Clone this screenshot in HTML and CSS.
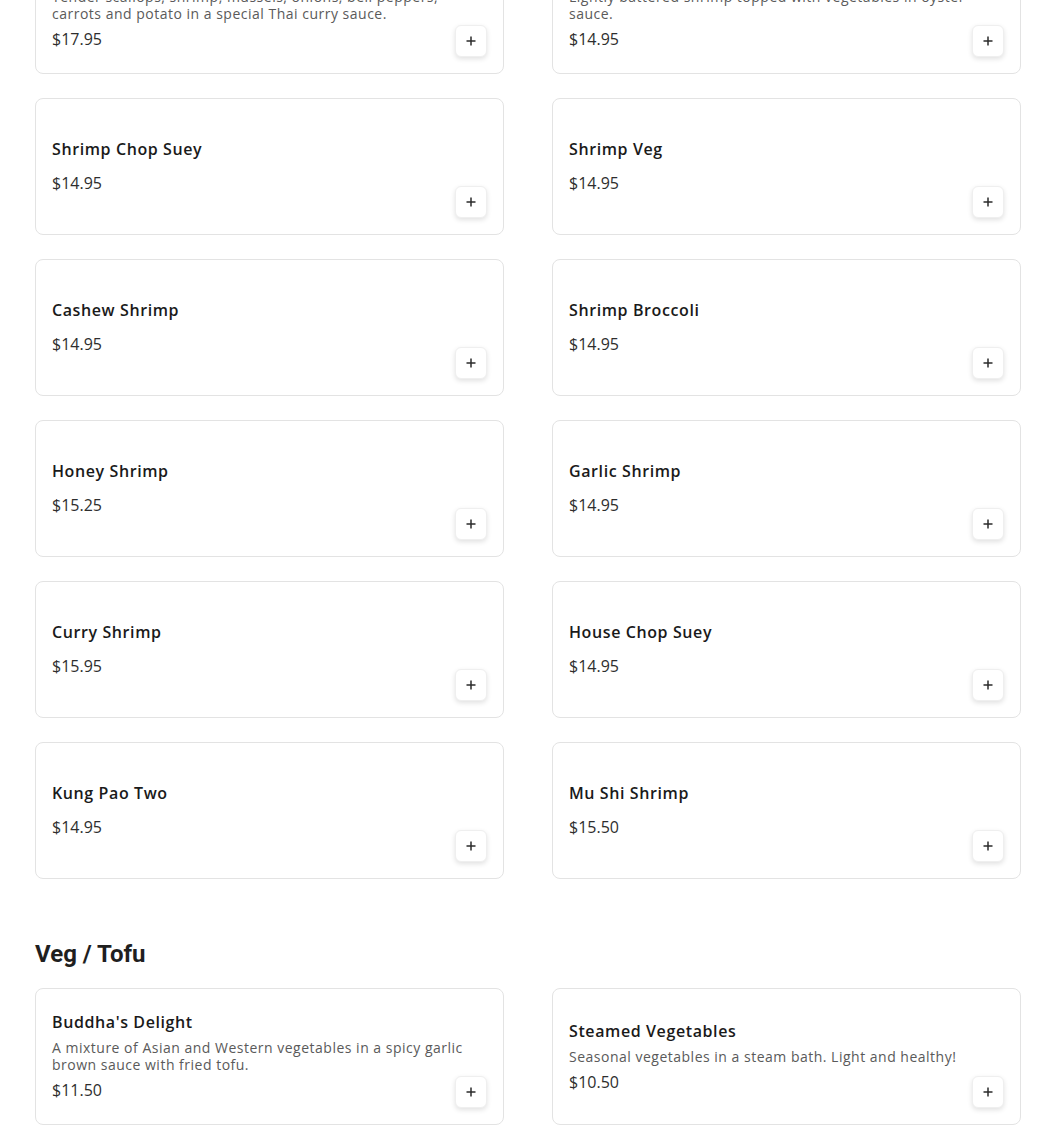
FILE: index.html
```html
<!DOCTYPE html>
<html lang="en">
<head>
<meta charset="utf-8">
<title>Menu</title>
<link rel="stylesheet" href="styles.css">
</head>
<body>
<main class="menu">
  <section class="section section-first">
    <div class="grid">
      <article class="card">
        <div class="info">
          <h3 class="name">Seafood Curry</h3>
          <p class="desc">Tender scallops, shrimp, mussels, onions, bell peppers, carrots and potato in a special Thai curry sauce.</p>
          <p class="price">$17.95</p>
        </div>
        <button class="add" aria-label="Add"><svg viewBox="0 0 12 12" width="12" height="12"><path d="M6 1.5v9M1.5 6h9" stroke="#2b2b2b" stroke-width="1.5" fill="none"/></svg></button>
      </article>
      <article class="card">
        <div class="info">
          <h3 class="name">Crispy Shrimp</h3>
          <p class="desc">Lightly battered shrimp topped with vegetables in oyster sauce.</p>
          <p class="price">$14.95</p>
        </div>
        <button class="add" aria-label="Add"><svg viewBox="0 0 12 12" width="12" height="12"><path d="M6 1.5v9M1.5 6h9" stroke="#2b2b2b" stroke-width="1.5" fill="none"/></svg></button>
      </article>
      <article class="card">
        <div class="info">
          <h3 class="name">Shrimp Chop Suey</h3>
          <p class="desc"></p>
          <p class="price">$14.95</p>
        </div>
        <button class="add" aria-label="Add"><svg viewBox="0 0 12 12" width="12" height="12"><path d="M6 1.5v9M1.5 6h9" stroke="#2b2b2b" stroke-width="1.5" fill="none"/></svg></button>
      </article>
      <article class="card">
        <div class="info">
          <h3 class="name">Shrimp Veg</h3>
          <p class="desc"></p>
          <p class="price">$14.95</p>
        </div>
        <button class="add" aria-label="Add"><svg viewBox="0 0 12 12" width="12" height="12"><path d="M6 1.5v9M1.5 6h9" stroke="#2b2b2b" stroke-width="1.5" fill="none"/></svg></button>
      </article>
      <article class="card">
        <div class="info">
          <h3 class="name">Cashew Shrimp</h3>
          <p class="desc"></p>
          <p class="price">$14.95</p>
        </div>
        <button class="add" aria-label="Add"><svg viewBox="0 0 12 12" width="12" height="12"><path d="M6 1.5v9M1.5 6h9" stroke="#2b2b2b" stroke-width="1.5" fill="none"/></svg></button>
      </article>
      <article class="card">
        <div class="info">
          <h3 class="name">Shrimp Broccoli</h3>
          <p class="desc"></p>
          <p class="price">$14.95</p>
        </div>
        <button class="add" aria-label="Add"><svg viewBox="0 0 12 12" width="12" height="12"><path d="M6 1.5v9M1.5 6h9" stroke="#2b2b2b" stroke-width="1.5" fill="none"/></svg></button>
      </article>
      <article class="card">
        <div class="info">
          <h3 class="name">Honey Shrimp</h3>
          <p class="desc"></p>
          <p class="price">$15.25</p>
        </div>
        <button class="add" aria-label="Add"><svg viewBox="0 0 12 12" width="12" height="12"><path d="M6 1.5v9M1.5 6h9" stroke="#2b2b2b" stroke-width="1.5" fill="none"/></svg></button>
      </article>
      <article class="card">
        <div class="info">
          <h3 class="name">Garlic Shrimp</h3>
          <p class="desc"></p>
          <p class="price">$14.95</p>
        </div>
        <button class="add" aria-label="Add"><svg viewBox="0 0 12 12" width="12" height="12"><path d="M6 1.5v9M1.5 6h9" stroke="#2b2b2b" stroke-width="1.5" fill="none"/></svg></button>
      </article>
      <article class="card">
        <div class="info">
          <h3 class="name">Curry Shrimp</h3>
          <p class="desc"></p>
          <p class="price">$15.95</p>
        </div>
        <button class="add" aria-label="Add"><svg viewBox="0 0 12 12" width="12" height="12"><path d="M6 1.5v9M1.5 6h9" stroke="#2b2b2b" stroke-width="1.5" fill="none"/></svg></button>
      </article>
      <article class="card">
        <div class="info">
          <h3 class="name">House Chop Suey</h3>
          <p class="desc"></p>
          <p class="price">$14.95</p>
        </div>
        <button class="add" aria-label="Add"><svg viewBox="0 0 12 12" width="12" height="12"><path d="M6 1.5v9M1.5 6h9" stroke="#2b2b2b" stroke-width="1.5" fill="none"/></svg></button>
      </article>
      <article class="card">
        <div class="info">
          <h3 class="name">Kung Pao Two</h3>
          <p class="desc"></p>
          <p class="price">$14.95</p>
        </div>
        <button class="add" aria-label="Add"><svg viewBox="0 0 12 12" width="12" height="12"><path d="M6 1.5v9M1.5 6h9" stroke="#2b2b2b" stroke-width="1.5" fill="none"/></svg></button>
      </article>
      <article class="card">
        <div class="info">
          <h3 class="name">Mu Shi Shrimp</h3>
          <p class="desc"></p>
          <p class="price">$15.50</p>
        </div>
        <button class="add" aria-label="Add"><svg viewBox="0 0 12 12" width="12" height="12"><path d="M6 1.5v9M1.5 6h9" stroke="#2b2b2b" stroke-width="1.5" fill="none"/></svg></button>
      </article>
    </div>
  </section>

  <section class="section">
    <h2 class="section-title">Veg / Tofu</h2>
    <div class="grid">
      <article class="card">
        <div class="info">
          <h3 class="name">Buddha's Delight</h3>
          <p class="desc">A mixture of Asian and Western vegetables in a spicy garlic brown sauce with fried tofu.</p>
          <p class="price">$11.50</p>
        </div>
        <button class="add" aria-label="Add"><svg viewBox="0 0 12 12" width="12" height="12"><path d="M6 1.5v9M1.5 6h9" stroke="#2b2b2b" stroke-width="1.5" fill="none"/></svg></button>
      </article>
      <article class="card">
        <div class="info">
          <h3 class="name">Steamed Vegetables</h3>
          <p class="desc">Seasonal vegetables in a steam bath. Light and healthy!</p>
          <p class="price">$10.50</p>
        </div>
        <button class="add" aria-label="Add"><svg viewBox="0 0 12 12" width="12" height="12"><path d="M6 1.5v9M1.5 6h9" stroke="#2b2b2b" stroke-width="1.5" fill="none"/></svg></button>
      </article>
    </div>
  </section>
</main>
</body>
</html>
```

FILE: styles.css
```css
* { box-sizing: border-box; }

html, body {
  margin: 0;
  padding: 0;
  background: #ffffff;
}

body {
  font-family: "Open Sans", "Liberation Sans", sans-serif;
  color: #1c1c1c;
}

.menu {
  padding: 0 29px 40px 35px;
}

.section-first {
  margin-top: -63px;
}

.section + .section {
  margin-top: 59px;
}

.section-title {
  font-family: Roboto, "Liberation Sans", sans-serif;
  font-weight: 700;
  font-size: 24px;
  line-height: 32px;
  margin: 0 0 18px 0;
  color: #1f1f1f;
}

.grid {
  display: grid;
  grid-template-columns: 1fr 1fr;
  column-gap: 48px;
  row-gap: 24px;
}

.card {
  display: grid;
  grid-template-columns: 1fr;
  grid-template-rows: 1fr;
  height: 137px;
  padding: 16px;
  border: 1px solid #e3e3e3;
  border-radius: 8px;
  background: #fff;
}

.info {
  grid-area: 1 / 1;
  align-self: center;
  display: flex;
  flex-direction: column;
  gap: 5px;
  margin-bottom: 1px;
}

.name {
  margin: 0;
  font-size: 16px;
  line-height: 24px;
  font-weight: 600;
  letter-spacing: 0.6px;
  color: #1a1a1a;
}

.desc {
  margin: 0;
  font-size: 14px;
  line-height: 17px;
  color: #5a5a5a;
  letter-spacing: 0.5px;
}

.price {
  margin: 0;
  font-size: 16px;
  line-height: 24px;
  color: #2e2e2e;
  letter-spacing: 0;
}

.add {
  grid-area: 1 / 1;
  justify-self: end;
  align-self: end;
  width: 32px;
  height: 32px;
  padding: 0;
  display: flex;
  align-items: center;
  justify-content: center;
  background: #fff;
  border: 1px solid #efefef;
  border-radius: 6px;
  box-shadow: 0 2px 5px rgba(0, 0, 0, 0.12);
  cursor: pointer;
}

.add svg { display: block; }
```
